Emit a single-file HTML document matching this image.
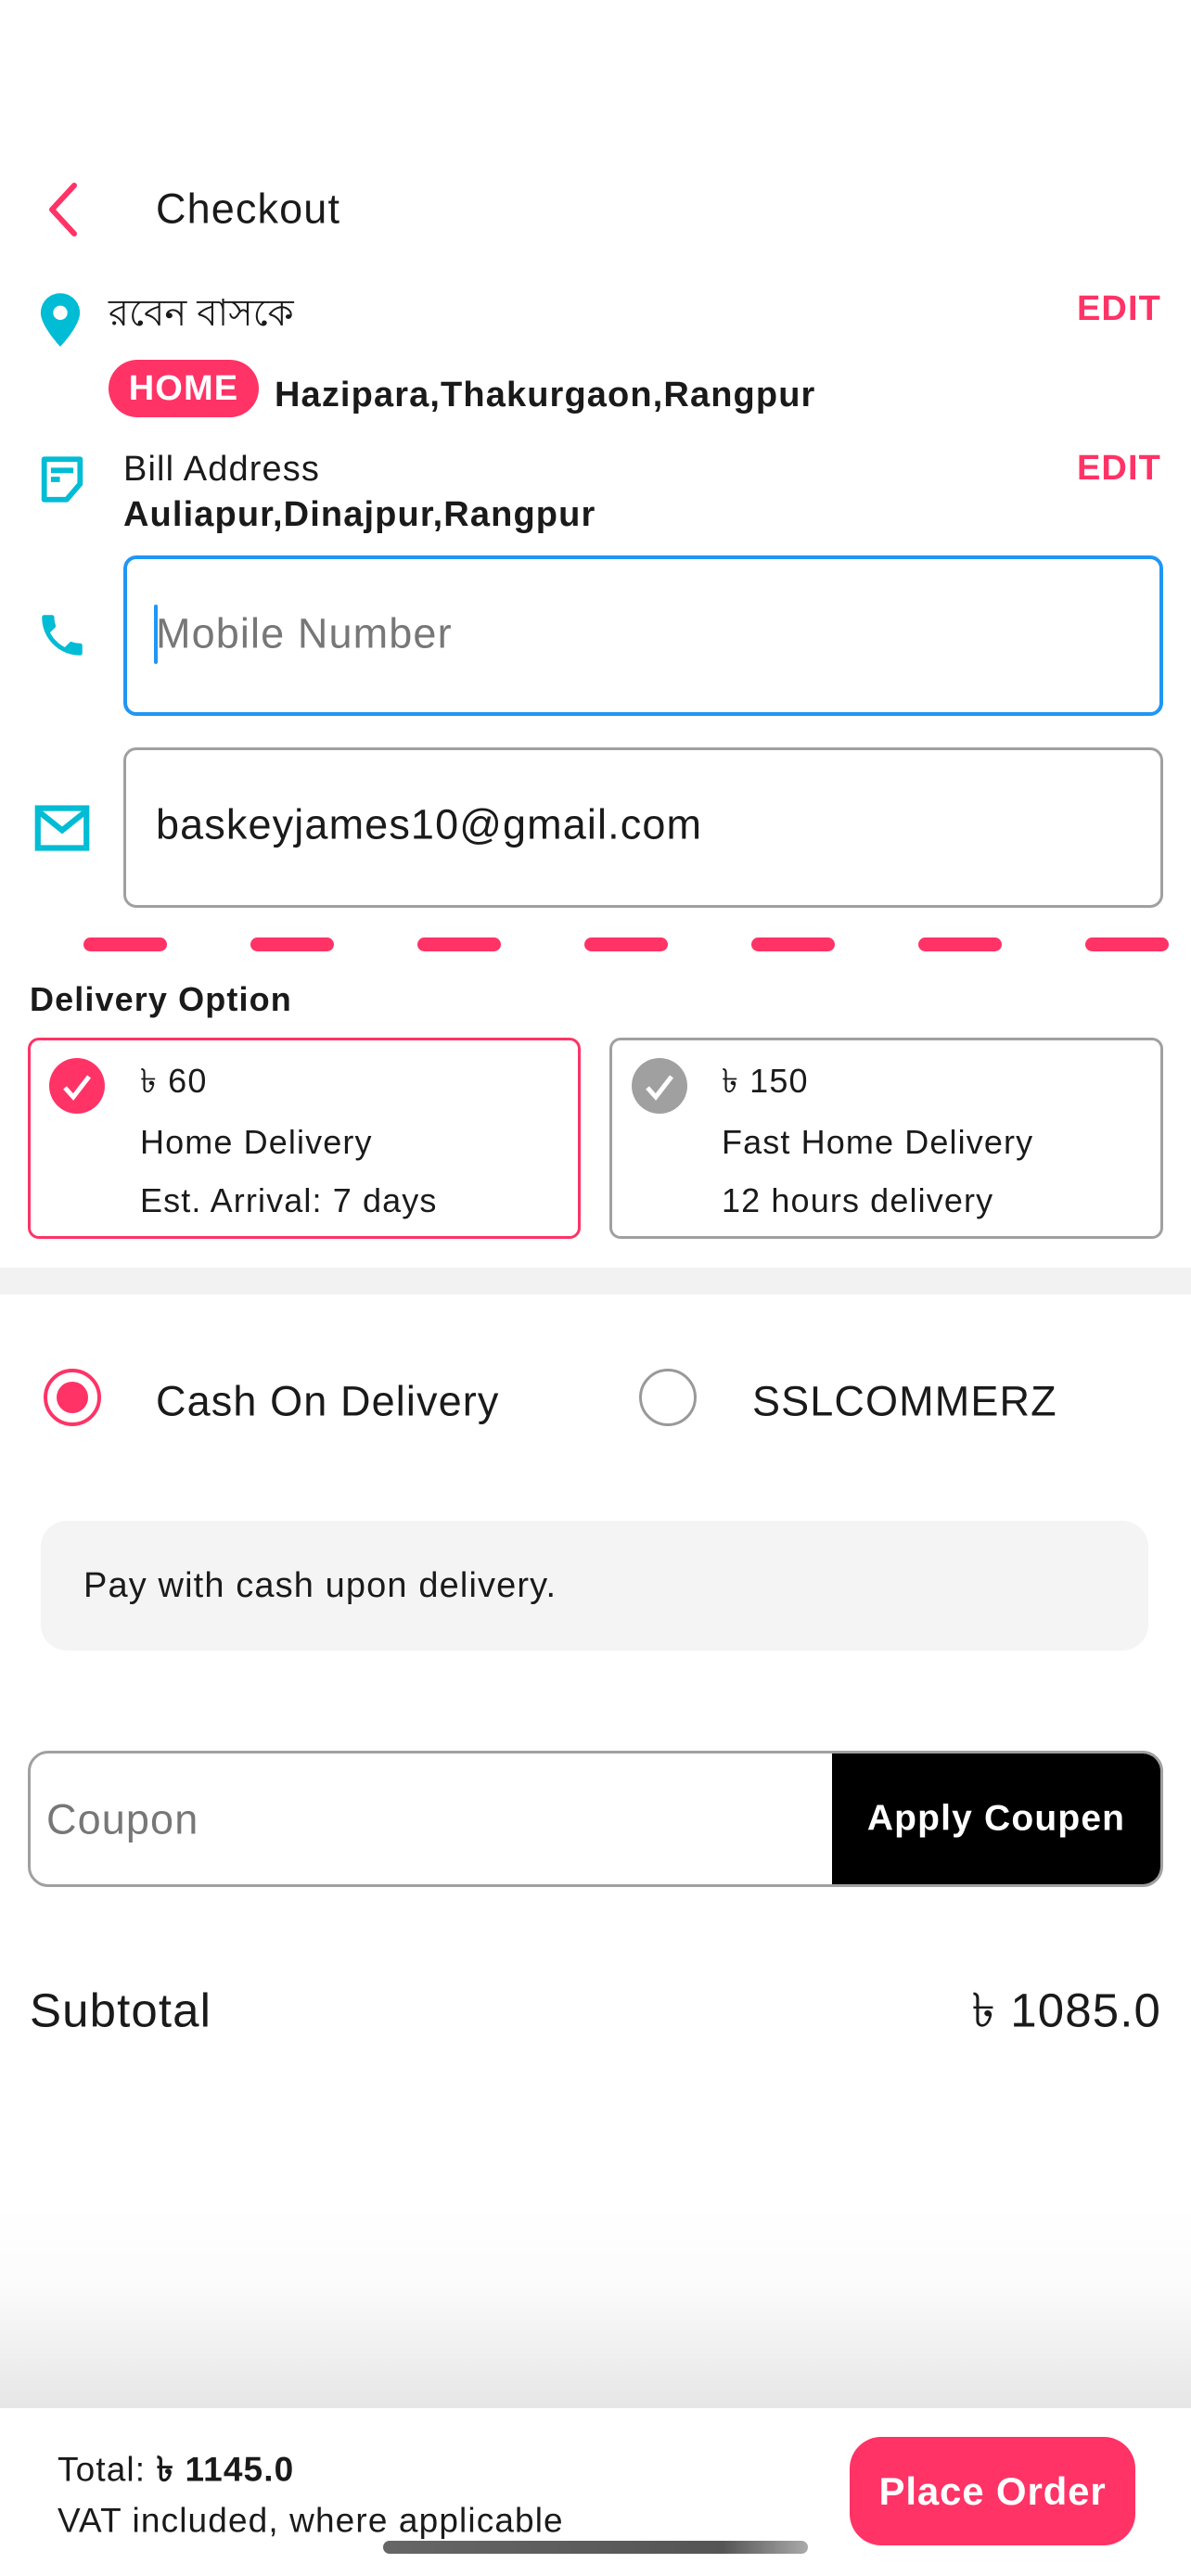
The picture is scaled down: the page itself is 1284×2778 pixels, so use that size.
<!DOCTYPE html>
<html><head><meta charset="utf-8"><style>
*{margin:0;padding:0;box-sizing:border-box}
body{width:1284px;height:2778px;position:relative;background:#fff;font-family:"Liberation Sans","Noto Sans CJK SC",sans-serif;color:#1a1a1a;overflow:hidden;letter-spacing:0.07em}
.t{position:absolute;white-space:nowrap;transform:translateY(-50%);line-height:1}
.pink{color:#ff3366}
.box{position:absolute}
</style></head><body>
<svg class="box" style="left:44px;top:196px" width="44" height="60" viewBox="0 0 44 60"><path d="M36 4 L12 30 L36 56" fill="none" stroke="#ff3366" stroke-width="6" stroke-linecap="round" stroke-linejoin="round"/></svg>
<div class="t" style="left:168px;top:225px;font-size:45px">Checkout</div>

<svg class="box" style="left:42px;top:314px" width="46" height="62" viewBox="0 0 24 32"><path d="M12 1C5.9 1 1 5.9 1 12c0 7.5 11 19 11 19s11-11.5 11-19C23 5.9 18.1 1 12 1z" fill="#00bcd4"/><circle cx="12" cy="12" r="4" fill="#fff"/></svg>
<div class="t" style="left:117px;top:338px;font-size:40px;letter-spacing:0">রবেন বাসকে</div>
<div class="t pink" style="right:32px;top:333px;font-size:38px;font-weight:bold">EDIT</div>
<div class="box" style="left:117px;top:388px;width:162px;height:62px;border-radius:31px;background:#ff3366;color:#fff;font-weight:bold;font-size:38px;line-height:62px;text-align:center">HOME</div>
<div class="t" style="left:296px;top:426px;font-size:38px;font-weight:bold">Hazipara,Thakurgaon,Rangpur</div>

<svg class="box" style="left:38px;top:488px" width="58" height="58" viewBox="0 0 24 24"><path d="M4 3h16v11l-6 7H4z" fill="none" stroke="#00bcd4" stroke-width="2.4" stroke-linejoin="round"/><path d="M7 8h10M7 12h4" stroke="#00bcd4" stroke-width="2.4"/></svg>
<div class="t" style="left:133px;top:506px;font-size:38px">Bill Address</div>
<div class="t pink" style="right:32px;top:505px;font-size:38px;font-weight:bold">EDIT</div>
<div class="t" style="left:133px;top:555px;font-size:38px;font-weight:bold">Auliapur,Dinajpur,Rangpur</div>

<svg class="box" style="left:38px;top:656px" width="58" height="58" viewBox="0 0 24 24"><path d="M6.6 10.8c1.4 2.8 3.8 5.1 6.6 6.6l2.2-2.2c.3-.3.7-.4 1-.2 1.1.4 2.3.6 3.6.6.6 0 1 .4 1 1V20c0 .6-.4 1-1 1C10.6 21 3 13.4 3 4c0-.6.4-1 1-1h3.5c.6 0 1 .4 1 1 0 1.3.2 2.5.6 3.6.1.3 0 .7-.2 1z" fill="#00bcd4"/></svg>
<div class="box" style="left:133px;top:599px;width:1121px;height:173px;border:4px solid #2196f3;border-radius:14px"></div>
<div class="box" style="left:166px;top:652px;width:4px;height:64px;background:#2196f3;border-radius:2px"></div>
<div class="t" style="left:168px;top:683px;font-size:45px;color:#777">Mobile Number</div>

<svg class="box" style="left:36px;top:864px" width="62" height="58" viewBox="0 0 26 24"><rect x="2" y="3" width="22" height="18" fill="none" stroke="#00bcd4" stroke-width="2.6"/><path d="M3 5l10 8 10-8" fill="none" stroke="#00bcd4" stroke-width="2.6"/></svg>
<div class="box" style="left:133px;top:806px;width:1121px;height:173px;border:3px solid #a0a0a0;border-radius:14px"></div>
<div class="t" style="left:168px;top:889px;font-size:45px">baskeyjames10@gmail.com</div>

<svg class="box" style="left:0;top:1011px" width="1284" height="15"><g fill="#ff3366"><rect x="90" y="0" width="90" height="15" rx="7.5"/><rect x="270" y="0" width="90" height="15" rx="7.5"/><rect x="450" y="0" width="90" height="15" rx="7.5"/><rect x="630" y="0" width="90" height="15" rx="7.5"/><rect x="810" y="0" width="90" height="15" rx="7.5"/><rect x="990" y="0" width="90" height="15" rx="7.5"/><rect x="1170" y="0" width="90" height="15" rx="7.5"/></g></svg>

<div class="t" style="left:32px;top:1078px;font-size:36px;font-weight:bold">Delivery Option</div>
<div class="box" style="left:30px;top:1119px;width:596px;height:217px;border:3px solid #ff3366;border-radius:12px"></div>
<svg class="box" style="left:53px;top:1141px" width="60" height="60" viewBox="0 0 60 60"><circle cx="30" cy="30" r="30" fill="#ff3366"/><path d="M17 32l9 10 17-22" fill="none" stroke="#fff" stroke-width="5"/></svg>
<div class="t" style="left:151px;top:1166px;font-size:36px">৳ 60</div>
<div class="t" style="left:151px;top:1232px;font-size:36px">Home Delivery</div>
<div class="t" style="left:151px;top:1295px;font-size:36px">Est. Arrival: 7 days</div>

<div class="box" style="left:657px;top:1119px;width:597px;height:217px;border:3px solid #a0a0a0;border-radius:12px"></div>
<svg class="box" style="left:681px;top:1141px" width="60" height="60" viewBox="0 0 60 60"><circle cx="30" cy="30" r="30" fill="#a0a0a0"/><path d="M17 32l9 10 17-22" fill="none" stroke="#fff" stroke-width="5"/></svg>
<div class="t" style="left:778px;top:1166px;font-size:36px">৳ 150</div>
<div class="t" style="left:778px;top:1232px;font-size:36px">Fast Home Delivery</div>
<div class="t" style="left:778px;top:1295px;font-size:36px">12 hours delivery</div>

<div class="box" style="left:0;top:1367px;width:1284px;height:29px;background:#f2f2f2"></div>

<div class="box" style="left:47px;top:1476px;width:62px;height:62px;border:4px solid #ff3366;border-radius:50%"></div>
<div class="box" style="left:61px;top:1490px;width:34px;height:34px;background:#ff3366;border-radius:50%"></div>
<div class="t" style="left:168px;top:1511px;font-size:45px">Cash On Delivery</div>
<div class="box" style="left:689px;top:1476px;width:62px;height:62px;border:3px solid #999;border-radius:50%"></div>
<div class="t" style="left:811px;top:1511px;font-size:45px">SSLCOMMERZ</div>

<div class="box" style="left:44px;top:1640px;width:1194px;height:140px;background:#f4f4f4;border-radius:28px"></div>
<div class="t" style="left:90px;top:1710px;font-size:38px">Pay with cash upon delivery.</div>

<div class="box" style="left:30px;top:1888px;width:1224px;height:147px;border:3px solid #a0a0a0;border-radius:22px;overflow:hidden"><div style="position:absolute;left:864px;top:0;right:0;bottom:0;background:#000"></div></div>
<div class="t" style="left:50px;top:1962px;font-size:45px;color:#777">Coupon</div>
<div class="t" style="left:894px;width:360px;text-align:center;top:1961px;font-size:39px;font-weight:bold;color:#fff;letter-spacing:0.03em">Apply Coupen</div>

<div class="t" style="left:32px;top:2168px;font-size:51px">Subtotal</div>
<div class="t" style="right:32px;top:2168px;font-size:51px">৳ 1085.0</div>

<div class="box" style="left:0;top:2380px;width:1284px;height:217px;background:linear-gradient(#fff,#fbfbfb 40%,#e6e6e6)"></div>

<div class="t" style="left:62px;top:2663px;font-size:37px">Total: <b>৳ 1145.0</b></div>
<div class="t" style="left:62px;top:2718px;font-size:37px">VAT included, where applicable</div>
<div class="box" style="left:916px;top:2628px;width:308px;height:117px;background:#ff3366;border-radius:34px;color:#fff;font-weight:bold;font-size:42px;line-height:117px;text-align:center;letter-spacing:0.02em">Place Order</div>
<div class="box" style="left:413px;top:2740px;width:458px;height:14px;border-radius:7px;background:linear-gradient(90deg,#666,#555 80%,#aaa)"></div>
</body></html>
